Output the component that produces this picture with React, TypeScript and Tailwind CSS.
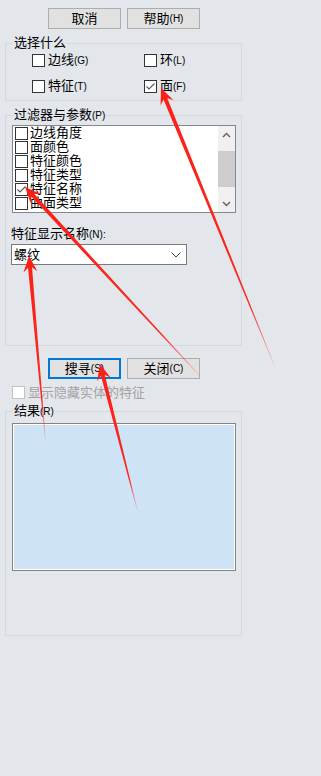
import React from "react";

type P = { x1: number; y1: number; x2: number; y2: number };

function arrowPoints({ x1, y1, x2, y2 }: P, w0 = 0.6, w1 = 4, hl = 16, hw = 7) {
  const dx = x2 - x1;
  const dy = y2 - y1;
  const len = Math.hypot(dx, dy);
  const ux = dx / len;
  const uy = dy / len;
  const nx = -uy;
  const ny = ux;
  const bx = x2 - ux * hl;
  const by = y2 - uy * hl;
  const ncx = x2 - ux * hl * 0.72;
  const ncy = y2 - uy * hl * 0.72;
  const pts = [
    [x1 + (nx * w0) / 2, y1 + (ny * w0) / 2],
    [ncx + (nx * w1) / 2, ncy + (ny * w1) / 2],
    [bx + nx * hw, by + ny * hw],
    [x2, y2],
    [bx - nx * hw, by - ny * hw],
    [ncx - (nx * w1) / 2, ncy - (ny * w1) / 2],
    [x1 - (nx * w0) / 2, y1 - (ny * w0) / 2],
  ];
  return pts.map((p) => `${p[0].toFixed(2)},${p[1].toFixed(2)}`).join(" ");
}

const arrows: P[] = [
  { x1: 275, y1: 367, x2: 161, y2: 88 },
  { x1: 200, y1: 376, x2: 25, y2: 187 },
  { x1: 45.5, y1: 441, x2: 29, y2: 256 },
  { x1: 137.5, y1: 511, x2: 100, y2: 364 },
];

function Box({ checked = false, disabled = false }: { checked?: boolean; disabled?: boolean }) {
  return (
    <span
      className={
        disabled
          ? "w-[13px] h-[13px] border border-[#c2c2c2] bg-white flex items-center justify-center shrink-0"
          : "w-[13px] h-[13px] border border-[#333333] bg-white flex items-center justify-center shrink-0"
      }
    >
      {checked && (
        <svg width="11" height="11" viewBox="0 0 11 11">
          <path d="M1.5 5.5 L4 8 L9.5 2.5" fill="none" stroke="#555555" strokeWidth="1.1" />
        </svg>
      )}
    </span>
  );
}

function Btn({ children, focused = false }: { children: React.ReactNode; focused?: boolean }) {
  return (
    <div
      className={
        focused
          ? "w-[73px] h-[21px] border-2 border-[#0078d7] bg-[#e1e1e1] flex items-center justify-center text-[13px] leading-none text-black"
          : "w-[73px] h-[21px] border border-[#adadad] bg-[#e1e1e1] flex items-center justify-center text-[13px] leading-none text-black"
      }
    >
      {children}
    </div>
  );
}

const Mn = ({ t }: { t: string }) => <span className="text-[10px]">{t}</span>;

function Chevron({ up = false }: { up?: boolean }) {
  return (
    <svg width="9" height="6" viewBox="0 0 9 6">
      <path
        d={up ? "M1 5 L4.5 1.5 L8 5" : "M1 1 L4.5 4.5 L8 1"}
        fill="none"
        stroke="#606060"
        strokeWidth="1.4"
      />
    </svg>
  );
}

export default function App() {
  const items = ["边线角度", "面颜色", "特征颜色", "特征类型", "特征名称", "曲面类型"];
  return (
    <div className="relative w-[321px] h-[776px] overflow-hidden bg-[#e3e6eb] text-black font-['Liberation_Sans','Noto_Sans_CJK_SC',sans-serif]">
      {/* top buttons */}
      <div className="pt-[8px] pl-[48px] flex gap-[6px]">
        <Btn>取消</Btn>
        <Btn>
          帮助<Mn t="(H)" />
        </Btn>
      </div>

      {/* 选择什么 */}
      <fieldset className="mt-[7px] ml-[5px] w-[237px] min-w-0 border border-[#d5d8dc] pb-[7px]">
        <legend className="ml-[7px] px-[1px] text-[13px] leading-[14px]">选择什么</legend>
        <div className="grid grid-cols-[112px_auto] pl-[26px] pt-[4px] gap-y-[13px]">
          <div className="flex items-center gap-[3px] h-[13px] text-[13px] leading-[14px]">
            <Box />
            <span>
              边线<Mn t="(G)" />
            </span>
          </div>
          <div className="flex items-center gap-[3px] h-[13px] text-[13px] leading-[14px]">
            <Box />
            <span>
              环<Mn t="(L)" />
            </span>
          </div>
          <div className="flex items-center gap-[3px] h-[13px] text-[13px] leading-[14px]">
            <Box />
            <span>
              特征<Mn t="(T)" />
            </span>
          </div>
          <div className="flex items-center gap-[3px] h-[13px] text-[13px] leading-[14px]">
            <Box checked />
            <span>
              面<Mn t="(F)" />
            </span>
          </div>
        </div>
      </fieldset>

      {/* 过滤器与参数 */}
      <fieldset className="mt-[7px] ml-[5px] w-[237px] min-w-0 border border-[#d5d8dc] pl-[6px] pb-[80px]">
        <legend className="ml-[1px] px-[1px] text-[13px] leading-[14px]">
          过滤器与参数<Mn t="(P)" />
        </legend>
        <div className="mt-[2px] w-[224px] h-[88px] border border-[#828790] bg-white flex">
          <div className="flex-1 pt-[1px] pl-[2px] flex flex-col">
            {items.map((it, i) => (
              <div key={it} className="h-[14px] flex items-start gap-[2px]">
                <Box checked={i === 4} />
                <span className="text-[13px] leading-[14px] -mt-[1px]">{it}</span>
              </div>
            ))}
          </div>
          <div className="w-[17px] bg-[#f0f0f0] flex flex-col">
            <div className="h-[17px] flex items-center justify-center">
              <Chevron up />
            </div>
            <div className="flex-1 pt-[8px] pb-[8px] flex flex-col">
              <div className="h-[36px] bg-[#cdcdcd]" />
            </div>
            <div className="h-[17px] flex items-center justify-center">
              <Chevron />
            </div>
          </div>
        </div>
        <div className="mt-[13px] -ml-[1px] text-[13px] leading-[16px]">
          特征显示名称<Mn t="(N):" />
        </div>
        <div className="mt-[1px] -ml-[1px] w-[176px] h-[21px] border border-[#7a7a7a] bg-white flex items-center justify-between pl-[2px] pr-[5px]">
          <span className="text-[13px] leading-[14px]">螺纹</span>
          <svg width="10" height="6" viewBox="0 0 10 6">
            <path d="M0.5 0.5 L5 5 L9.5 0.5" fill="none" stroke="#404040" strokeWidth="1" />
          </svg>
        </div>
      </fieldset>

      {/* buttons */}
      <div className="mt-[12px] pl-[48px] flex gap-[6px]">
        <Btn focused>
          搜寻<Mn t="(S)" />
        </Btn>
        <Btn>
          关闭<Mn t="(C)" />
        </Btn>
      </div>

      {/* disabled checkbox */}
      <div className="mt-[7px] pl-[12px] flex items-center gap-[3px] h-[13px]">
        <Box disabled />
        <span className="text-[13px] leading-[14px] text-[#a3a3a3]">显示隐藏实体的特征</span>
      </div>

      {/* 结果 */}
      <fieldset className="mt-[5px] ml-[5px] w-[237px] min-w-0 border border-[#d5d8dc] pl-[6px] pb-[64px]">
        <legend className="ml-[1px] px-[1px] text-[13px] leading-[14px]">
          结果<Mn t="(R)" />
        </legend>
        <div className="mt-[4px] w-[224px] h-[148px] border border-[#838383] bg-[#cfe3f7]">
          <div className="w-full h-full border border-white" />
        </div>
      </fieldset>

      {/* annotation arrows */}
      <svg className="absolute left-0 top-0 pointer-events-none" width="321" height="776" viewBox="0 0 321 776">
        <defs>
          {arrows.map((a, i) => (
            <linearGradient
              key={i}
              id={`g${i}`}
              gradientUnits="userSpaceOnUse"
              x1={a.x1}
              y1={a.y1}
              x2={a.x2}
              y2={a.y2}
            >
              <stop offset="0" stopColor="#fb2016" stopOpacity="0.1" />
              <stop offset="0.22" stopColor="#fb2016" stopOpacity="0.95" />
              <stop offset="1" stopColor="#fb2016" stopOpacity="1" />
            </linearGradient>
          ))}
        </defs>
        {arrows.map((a, i) => (
          <polygon key={i} points={arrowPoints(a)} fill={`url(#g${i})`} />
        ))}
      </svg>
    </div>
  );
}
